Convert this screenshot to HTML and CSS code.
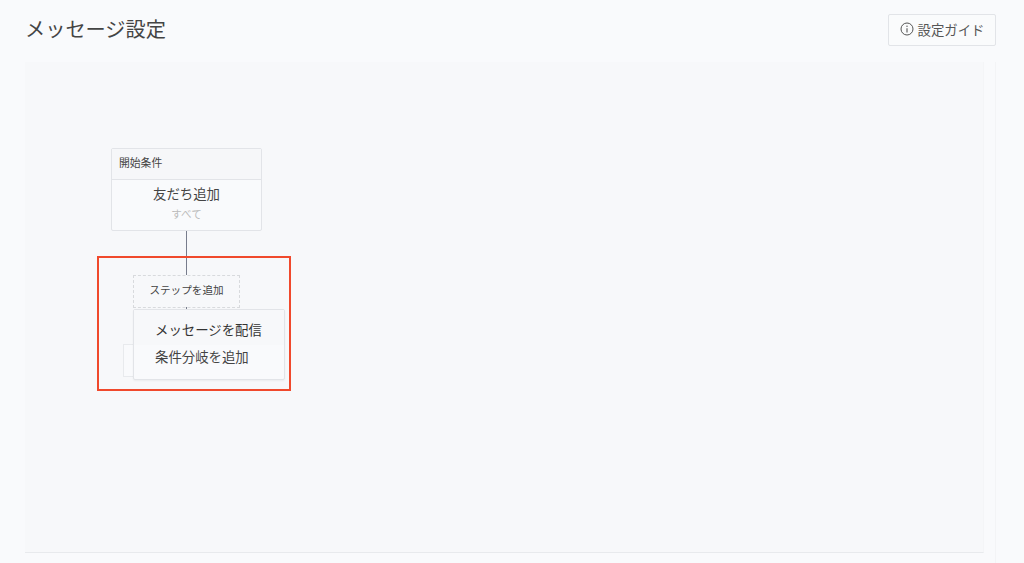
FILE: index.html
```html
<!DOCTYPE html>
<html lang="ja">
<head>
    <meta charset="UTF-8" />
    <meta name="viewport" content="width=device-width, initial-scale=1.0" />
    <title>メッセージ設定</title>
    <link rel="stylesheet" href="styles.css">
</head>
<body>
    <div class="page">
        <header class="page-header">
            <h1 class="page-title">メッセージ設定</h1>
            <button class="guide-btn">
                <svg class="guide-icon" viewBox="0 0 14 14" width="14" height="14">
                    <circle cx="7" cy="7" r="6" fill="none" stroke="#555" stroke-width="1"/>
                    <circle cx="7" cy="4.3" r="0.7" fill="#555"/>
                    <path d="M7 6.2v4.4" fill="none" stroke="#555" stroke-width="1.1"/>
                </svg>
                設定ガイド
            </button>
        </header>

        <main class="canvas">
            <div class="node start-node">
                <div class="start-head">開始条件</div>
                <div class="start-body">
                    <div class="start-name">友だち追加</div>
                    <div class="start-sub">すべて</div>
                </div>
            </div>
            <div class="line line-top"></div>
            <div class="node step-node">ステップを追加</div>
            <div class="line line-bottom"></div>
            <div class="node end-node"></div>
            <div class="step-menu">
                <div class="menu-item menu-item-active">メッセージを配信</div>
                <div class="menu-item menu-item-plain">条件分岐を追加</div>
            </div>
            <div class="highlight"></div>
        </main>
    </div>
</body>
</html>
```

FILE: styles.css
```css
html, body {
    height: 100%;
    margin: 0;
    padding: 0;
    overflow: hidden;
}

body {
    background: #f9fafc;
    color: #444;
    font-family: "Noto Sans CJK JP", "Noto Sans", sans-serif;
}

.page {
    box-sizing: border-box;
    width: 996px;
    height: 563px;
    padding: 14px 0 0 25px;
    display: flex;
    flex-direction: column;
}

.page-header {
    height: 32px;
    display: flex;
    align-items: center;
    justify-content: space-between;
    margin-bottom: 16px;
}

.page-title {
    margin: 0 0 2px;
    font-size: 20.2px;
    font-weight: 400;
    line-height: 30px;
    color: #444;
}

.guide-btn {
    box-sizing: border-box;
    width: 108px;
    height: 32px;
    padding: 0 0 3px;
    display: flex;
    align-items: center;
    justify-content: center;
    gap: 4px;
    background: #fafbfc;
    border: 1px solid #e2e4e8;
    border-radius: 2px;
    color: #555;
    font-family: inherit;
    font-size: 13.4px;
}

.canvas {
    position: relative;
    box-sizing: border-box;
    width: 959px;
    height: 491px;
    background: #f7f8fa;
    border-right: 1px solid #f4f5f7;
    border-bottom: 1px solid #e8eaed;
}

/* faint rule right of the canvas */
.canvas::after {
    content: "";
    position: absolute;
    top: 0;
    bottom: -12px;
    right: -13px;
    width: 1px;
    background: #f3f4f6;
}

/* diagram nodes, offsets are from the canvas corner */
.node {
    position: absolute;
    box-sizing: border-box;
}

.start-node {
    left: 86px;
    top: 86px;
    width: 151px;
    height: 83px;
    background: #f9fafc;
    border: 1px solid #e2e4e8;
    border-radius: 2px;
}

.start-head {
    height: 30px;
    padding-left: 7px;
    background: #f6f7f9;
    border-bottom: 1px solid #e2e4e8;
    font-size: 10.8px;
    line-height: 27px;
}

.start-body {
    text-align: center;
}

.start-name {
    margin-top: 3px;
    font-size: 13.4px;
    line-height: 20px;
}

.start-sub {
    margin-top: 3px;
    font-size: 10.6px;
    line-height: 16px;
    color: #bbb;
}

.line {
    position: absolute;
    left: 161px;
    width: 1px;
    background: #777c8c;
}

.line-top {
    top: 169px;
    height: 44px;
}

.line-bottom {
    top: 245px;
    height: 4px;
}

.step-node {
    left: 108px;
    top: 213px;
    width: 107px;
    height: 33px;
    border: 1px dashed #d8dadd;
    font-size: 10.6px;
    line-height: 28px;
    text-align: center;
}

.end-node {
    left: 98px;
    top: 282px;
    width: 40px;
    height: 33px;
    background: #f9fafc;
    border: 1px solid #e8eaed;
}

.step-menu {
    position: absolute;
    left: 108px;
    top: 247px;
    box-sizing: border-box;
    width: 152px;
    height: 71px;
    background: #f9fafc;
    border: 1px solid #e2e4e8;
    border-radius: 2px;
    box-shadow: 0 1px 2px rgba(0, 0, 0, 0.05);
}

.menu-item {
    padding-left: 21px;
    font-size: 13.4px;
}

.menu-item-active {
    height: 33px;
    padding-top: 2px;
    line-height: 34px;
    background: #f7f8fa;
    color: #333;
}

.menu-item-plain {
    height: 23px;
    line-height: 23px;
}

.highlight {
    position: absolute;
    left: 72px;
    top: 194px;
    box-sizing: border-box;
    width: 194px;
    height: 135px;
    border: 2px solid #f0492c;
}
```
